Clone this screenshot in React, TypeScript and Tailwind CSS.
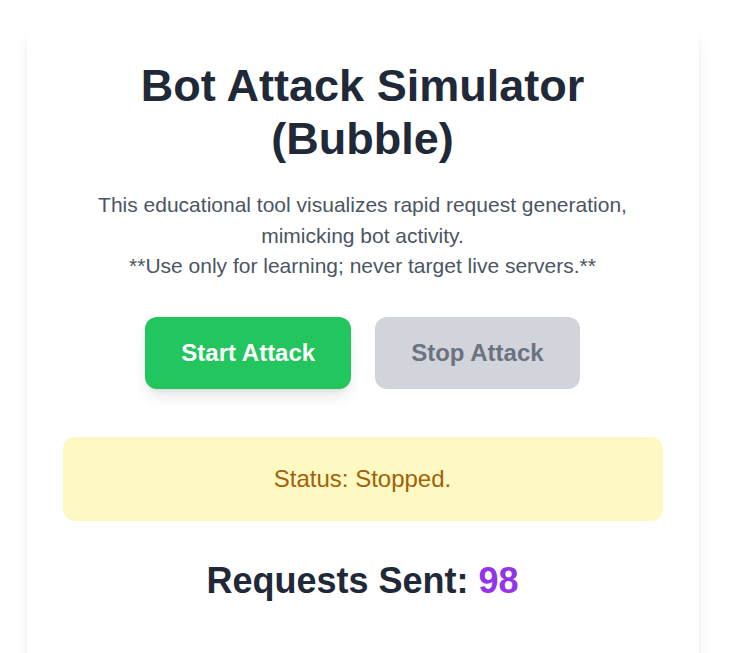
import React from "react";

export default function App() {
  return (
    <div
      className="min-h-screen bg-white flex justify-center pt-[23px] pb-10 pr-[13px]"
      style={{ fontFamily: '"Liberation Sans", Arial, sans-serif' }}
    >
      <div className="w-full max-w-2xl bg-white rounded-2xl shadow-lg p-9 flex flex-col items-center">
        <h1 className="text-[45px] leading-[53px] font-bold text-[#1f2937] text-center">
          Bot Attack Simulator (Bubble)
        </h1>
        <p className="mt-[25px] text-[21px] leading-[30.5px] text-[#4b5563] text-center">
          This educational tool visualizes rapid request generation,
          <br />
          mimicking bot activity.
          <br />
          **Use only for learning; never target live servers.**
        </p>
        <div className="mt-[35px] flex gap-6">
          <button className="bg-[#22c55e] text-white text-2xl font-bold px-9 py-5 leading-8 rounded-xl shadow-lg">
            Start Attack
          </button>
          <button className="bg-[#d1d5db] text-[#6b7280] text-2xl font-bold px-9 py-5 leading-8 rounded-xl">
            Stop Attack
          </button>
        </div>
        <div className="mt-12 w-full bg-[#fef9c3] rounded-xl p-6 text-center text-2xl leading-9 text-[#a16207]">
          Status: Stopped.
        </div>
        <div className="mt-10 text-4xl leading-10 font-bold text-[#1f2937]">
          Requests Sent: <span className="text-[#9333ea]">98</span>
        </div>
        <div className="h-[300px]" />
      </div>
    </div>
  );
}
